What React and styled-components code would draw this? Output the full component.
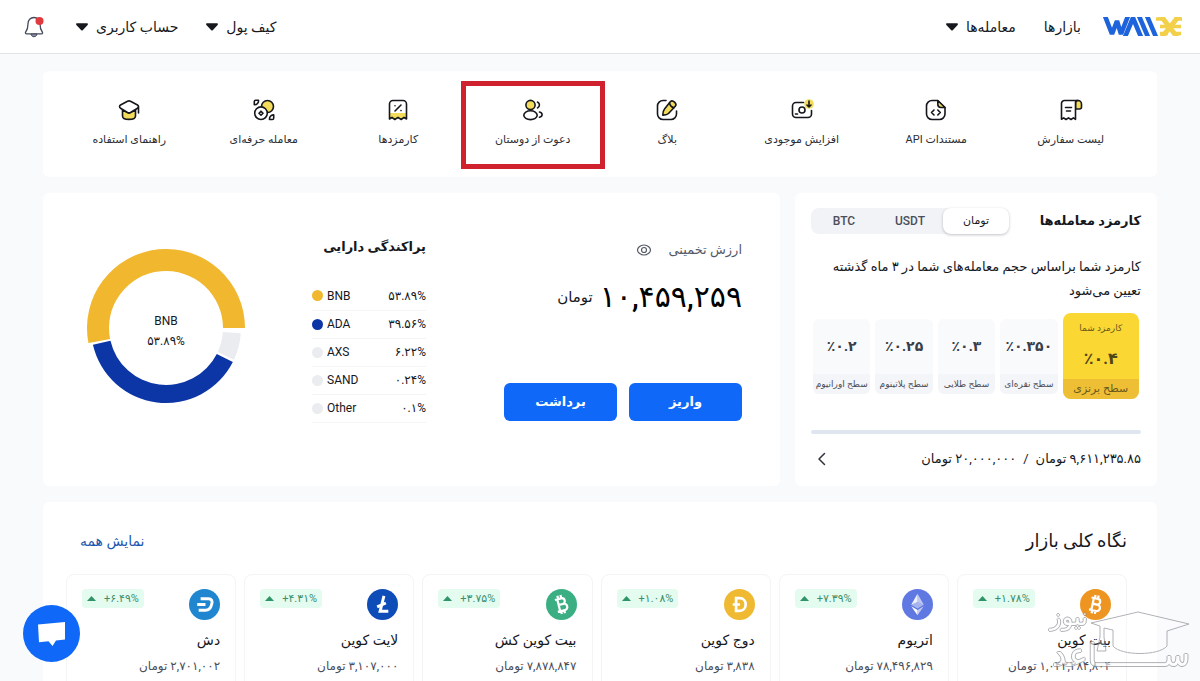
import React, { useState } from "react";
import styled, { createGlobalStyle, css } from "styled-components";

const GlobalStyle = createGlobalStyle`
  * { box-sizing: border-box; }
  body {
    margin: 0;
    background: #f9fafc;
    color: #16181d;
    font-family: Roboto, "DejaVu Sans", sans-serif;
    font-size: 13px;
    line-height: 20px;
  }
  button { font: inherit; color: inherit; border: 0; padding: 0; background: none; cursor: pointer; }
  a { color: inherit; text-decoration: none; }
  h1, h2, h3, p, dl, dd, dt, ul { margin: 0; padding: 0; }
  ul { list-style: none; }
`;

const Page = styled.div`
  min-height: 100vh;
`;

const Header = styled.header`
  display: flex;
  align-items: center;
  justify-content: space-between;
  height: 54px;
  padding: 0 17px 0 24px;
  background: #fff;
  border-bottom: 1px solid #e2e4e9;
`;

const NavGroup = styled.nav`
  display: flex;
  align-items: center;
  gap: 28px;
`;

const Brand = styled.a`
  display: flex;
  margin-left: -6px;
`;

const NavLink = styled.a`
  font-size: 14px;
`;

const NavButton = styled.button`
  display: flex;
  align-items: center;
  gap: 8px;
  font-size: 14px;
`;

const IconButton = styled.button`
  display: flex;
`;

const BellButton = styled(IconButton)`
  padding-right: 4px;
`;

const Main = styled.main`
  display: flex;
  flex-direction: column;
  gap: 16px;
  padding: 17px 43px 0;
`;

const Panel = styled.section`
  background: #fff;
  border-radius: 6px;
`;

const QuickPanel = styled(Panel)`
  display: grid;
  grid-template-columns: repeat(8, 1fr);
  padding: 15px 19px 13px;
`;

const QuickLink = styled.a`
  display: flex;
  flex-direction: column;
  align-items: center;
  gap: 8px;
  height: 78px;
  padding-top: 12px;
  font-size: 11px;
  color: #2b2e35;
  outline: ${(p) => (p.$marked ? "5px solid #d0222e" : "none")};
`;

const Columns = styled.div`
  display: grid;
  grid-template-columns: 362px minmax(0, 1fr);
  gap: 15px;
`;

const FeePanel = styled(Panel)`
  padding: 15px 16px 17px;
`;

const FeeHead = styled.div`
  display: flex;
  align-items: center;
  justify-content: space-between;
`;

const FeeTitle = styled.h2`
  font-size: 13px;
  font-weight: 700;
`;

const Segments = styled.div`
  display: grid;
  grid-template-columns: repeat(3, 66px);
  height: 26px;
  background: #f2f3f6;
  border-radius: 8px;
`;

const Segment = styled.button`
  font-size: 12px;
  font-weight: 500;
  color: #4a4e5a;
  border-radius: 8px;
  ${(p) =>
    p.$active &&
    css`
      font-size: 11px;
      color: #16181d;
      background: #fff;
      box-shadow: 0 1px 3px rgba(30, 40, 60, 0.28);
    `}
`;

const FeeText = styled.p`
  margin-top: 21px;
  font-size: 13px;
  line-height: 24px;
`;

const Tiers = styled.ul`
  display: flex;
  align-items: center;
  gap: 5px;
  margin-top: 10px;
  padding: 0 2px;
`;

const Tier = styled.li`
  flex: 1 1 0;
  display: flex;
  flex-direction: column;
  height: ${(p) => (p.$current ? "86px" : "75px")};
  flex-grow: ${(p) => (p.$current ? 4 : 3)};
  overflow: hidden;
  border-radius: ${(p) => (p.$current ? "8px" : "6px")};
  background: ${(p) => (p.$current ? "#fbd734" : "#f9fafc")};
  text-align: center;
  white-space: nowrap;
`;

const TierCaption = styled.span`
  margin-top: 5px;
  font-size: 9px;
  color: #6b5a1c;
`;

const TierRate = styled.strong`
  flex: 1;
  display: flex;
  align-items: center;
  justify-content: center;
  font-size: ${(p) => (p.$current ? "16px" : "14px")};
  color: ${(p) => (p.$current ? "#4f4518" : "#3a3f4b")};
`;

const TierName = styled.span`
  display: flex;
  justify-content: center;
  font-size: ${(p) => (p.$current ? "11px" : "9px")};
  background: ${(p) => (p.$current ? "#eebf35" : "#f4f5f8")};
  color: ${(p) => (p.$current ? "#6b5a1c" : "#4a4e5a")};
`;

const Track = styled.div`
  height: 4px;
  margin-top: 31px;
  border-radius: 2px;
  background: #dfe6f0;
`;

const FeeFoot = styled.div`
  display: flex;
  align-items: center;
  justify-content: space-between;
  margin-top: 15px;
  padding-left: 6px;
  font-size: 13px;
`;

const Volume = styled.div`
  display: flex;
  gap: 7px;
`;

const WealthPanel = styled(Panel)`
  display: flex;
  padding: 44px 38px 0 43px;
`;

const Balance = styled.div`
  flex: 0 0 238px;
`;

const BalanceLabel = styled.div`
  display: flex;
  align-items: center;
  gap: 17px;
  height: 26px;
  font-size: 13px;
  color: #555a66;
`;

const Amount = styled.p`
  display: flex;
  align-items: center;
  gap: 7px;
  height: 40px;
  margin-top: 14px;
  font-size: 15px;
  white-space: nowrap;
`;

const AmountValue = styled.span`
  font-size: 30px;
  font-weight: 500;
  color: #000;
`;

const Actions = styled.div`
  display: flex;
  gap: 12px;
  margin-top: 66px;
`;

const PrimaryButton = styled.button`
  flex: 1;
  height: 38px;
  border-radius: 6px;
  background: #0f68f8;
  color: #fff;
  font-size: 13px;
  font-weight: 700;
`;

const Spread = styled.div`
  flex: 0 0 114px;
  margin-right: 78px;
`;

const SpreadTitle = styled.h2`
  height: 22px;
  font-size: 13px;
  font-weight: 700;
  white-space: nowrap;
`;

const AssetTable = styled.table`
  width: 100%;
  margin-top: 23px;
  border-collapse: collapse;
  direction: ltr;
`;

const AssetName = styled.th`
  height: 28px;
  padding: 0;
  border-bottom: 1px solid #f4f5f7;
  font-size: 12px;
  font-weight: 400;
  text-align: left;
`;

const AssetLabel = styled.span`
  display: flex;
  align-items: center;
  gap: 4px;
`;

const Dot = styled.i`
  width: 11px;
  height: 11px;
  border-radius: 50%;
  background: ${(p) => p.$color};
`;

const AssetShare = styled.td`
  padding: 0;
  border-bottom: 1px solid #f4f5f7;
  font-size: 12px;
  text-align: right;
`;

const Donut = styled.div`
  display: grid;
  place-items: center;
  width: 160px;
  height: 160px;
  margin: 11px auto 0 0;
  & > * { grid-area: 1 / 1; }
`;

const DonutLabel = styled.div`
  padding-top: 6px;
  font-size: 12px;
  text-align: center;
`;

const MarketPanel = styled(Panel)`
  padding: 26px 30px 20px 23px;
`;

const MarketHead = styled.div`
  display: flex;
  align-items: center;
  justify-content: space-between;
  height: 26px;
  padding-left: 14px;
`;

const MarketTitle = styled.h2`
  font-size: 18px;
  font-weight: 500;
`;

const MoreLink = styled.a`
  font-size: 14px;
  color: #1c56b0;
`;

const CoinGrid = styled.ul`
  display: grid;
  grid-template-columns: repeat(6, minmax(0, 1fr));
  gap: 8px;
  margin-top: 20px;
`;

const CoinCard = styled.li`
  padding: 14px 15px 20px;
  border: 1px solid #f3f4f6;
  border-radius: 8px;
`;

const CoinTop = styled.div`
  display: flex;
  align-items: flex-start;
  justify-content: space-between;
`;

const Change = styled.span`
  display: flex;
  align-items: center;
  gap: 8px;
  height: 19px;
  padding: 0 5px;
  border-radius: 4px;
  background: #e4fbef;
  color: #3f8f6c;
  font-size: 11px;
`;

const CoinName = styled.h3`
  margin-top: 8px;
  font-size: 14px;
  font-weight: 400;
  line-height: 24px;
`;

const CoinPrice = styled.p`
  margin-top: 3px;
  font-size: 12px;
  line-height: 22px;
  color: #4a4e5a;
  white-space: nowrap;
`;

const ChatButton = styled.button`
  position: fixed;
  left: 23px;
  bottom: 19px;
  display: flex;
  align-items: center;
  justify-content: center;
  width: 57px;
  height: 57px;
  border-radius: 50%;
  background: #0f68f8;
`;

const Watermark = styled.div`
  position: fixed;
  right: 10px;
  bottom: 4px;
  width: 160px;
  height: 76px;
  pointer-events: none;
  direction: rtl;
  opacity: 0.65;
  color: #fff;
  text-shadow: 1px 0 #85888e, -1px 0 #85888e, 0 1px #85888e, 0 -1px #85888e;
  white-space: nowrap;
`;

const MarkTop = styled.span`
  position: absolute;
  right: 102px;
  top: 0;
  font-size: 24px;
  line-height: 32px;
`;

const MarkBottom = styled.span`
  position: absolute;
  right: 0;
  bottom: 0;
  font-size: 32px;
  line-height: 44px;
`;

const MarkCap = styled.svg`
  position: absolute;
  right: 0;
  top: 10px;
`;

const Caret = () => (
  <svg width="12" height="8" viewBox="0 0 13 8" aria-hidden="true">
    <path d="M1.2 0h10.6c1 0 1.5 1 .8 1.7L7.3 7.4a1.1 1.1 0 0 1-1.6 0L.4 1.7C-.3 1 .2 0 1.2 0z" fill="#16181d" />
  </svg>
);

const Logo = () => (
  <svg width="80" height="19" viewBox="0 0 80 19" role="img" aria-label="Wallex">
    <g fill="none" stroke="#1c63dc" strokeWidth="4.6" strokeLinejoin="bevel">
      <path d="M2 -1L9 17L14 4L18 17L25 -1" />
      <path d="M22 20L30 1L38 20" />
      <path d="M36 -1L45 20" />
      <path d="M44 -1L53 20" />
    </g>
    <g fill="none" stroke="#f2d04a">
      <path d="M58 -1L74 20M76 -1L59 20" strokeWidth="5" />
      <path d="M53 2H61M57 9.500H78M57 16.500H65M71 2H79M71 16.500H78" strokeWidth="3.500" />
    </g>
  </svg>
);

const Bell = () => (
  <svg width="20" height="22" viewBox="0 0 20 22" fill="none" aria-hidden="true">
    <path d="M10 1.500c-3.600 0-6 2.600-6 6.200 0 4.200-.8 6.300-2.300 8.300-.6.800-.2 1.800.8 1.800h15c1 0 1.400-1 .8-1.800-1.500-2-2.300-4.100-2.300-8.300 0-3.600-2.400-6.200-6-6.200z" stroke="#454a5c" strokeWidth="1.300" />
    <path d="M7 18c.3 1.700 1.500 2.700 3 2.700s2.700-1 3-2.700z" fill="#8f95a5" stroke="#454a5c" />
    <circle cx="15.500" cy="5" r="4" fill="#e03a3e" />
  </svg>
);

const Y = "#f3dc5c";

const QuickIcon = ({ kind }) => {
  const shapes = {
    list: (
      <>
        <path d="M18 2.500h1a3.500 3.500 0 0 1 3.500 3.500v3a2 2 0 0 1-2 2H16.500V4.500z" fill={Y} />
        <path d="M19 2.500H5.500a3 3 0 0 0-3 3V21.300l2.200-1.500 2.300 1.700 2.500-1.700 2.500 1.700 2.400-1.700 2.100 1.500V4.500a2 2 0 0 1 2-2z" fill="#fff" />
        <path d="M6.500 9.500h6M7.500 13h4" />
      </>
    ),
    api: (
      <>
        <path d="M13.500 2.500H8a5.500 5.500 0 0 0-5.500 5.500v8A5.500 5.500 0 0 0 8 21.500h7.500A5.500 5.500 0 0 0 21 16V9.500z" />
        <path d="M13.800 2.500L21 9.500h-4a3.200 3.200 0 0 1-3.200-3.200z" fill={Y} />
        <path d="M10 12l-2.500 2.500L10 17M13.800 12l2.500 2.500-2.500 2.500" />
      </>
    ),
    deposit: (
      <>
        <circle cx="19" cy="6" r="4.800" fill={Y} stroke="none" />
        <path d="M13.500 4.500H6a3.500 3.500 0 0 0-3.500 3.500v8A3.500 3.500 0 0 0 6 19.500h12a3.500 3.500 0 0 0 3.500-3.500v-3.500" />
        <circle cx="12" cy="12" r="3" />
        <path d="M5.500 16h2M19 3v6M17 7l2 2 2-2" />
      </>
    ),
    blog: (
      <>
        <path d="M11 2.500H8A5.500 5.500 0 0 0 2.500 8v8A5.500 5.500 0 0 0 8 21.500h8a5.500 5.500 0 0 0 5.500-5.500v-3" />
        <path d="M15.500 3.500c2.200-2.200 7 2.300 4.800 4.700L13.500 15.500c-1.500 1.500-3.500 1.500-5.700 1.600.1-2.200.2-4.200 1.700-6z" fill={Y} />
        <path d="M14.500 5c.5 2.500 2 4.200 4.500 4.700" />
      </>
    ),
    friends: (
      <>
        <circle cx="9.500" cy="7" r="4.600" fill={Y} />
        <ellipse cx="9.500" cy="17.200" rx="6.700" ry="4.400" />
        <path d="M16.500 4a3.300 3.300 0 0 1 0 6M18.500 14c3.500.8 3.500 4.400 0 5.300" />
      </>
    ),
    fees: (
      <>
        <path d="M4 15h16v6l-2.500-1.700L15 21.500l-3-2.200-2.800 2.200-2.700-2.200L4 21z" fill={Y} stroke="none" />
        <path d="M7 2.500h10a3.500 3.500 0 0 1 3.500 3.500v15l-2.500-1.600-2.800 2.100-3.200-2.100-3.200 2.100L6 19.400 3.500 21V6A3.500 3.500 0 0 1 7 2.500z" />
        <path d="M9 13l6-6M9 7.700v.1M15 12.500v.1" />
      </>
    ),
    trade: (
      <>
        <circle cx="15.500" cy="8.500" r="6" fill={Y} />
        <circle cx="9" cy="15.200" r="6.300" fill="#fff" />
        <path d="M9 13.200l2 2-2 2-2-2zM2.300 3.500c0-.8.500-1.300 1.300-1.300h2.900c.3 2.500-1.500 4.800-4.200 4.600zM21.700 20.200c0 .8-.5 1.300-1.300 1.300h-2.900c-.3-2.500 1.500-4.800 4.200-4.600z" />
      </>
    ),
    guide: (
      <>
        <path d="M5.500 12v6c0 4.500 13 4.500 13 0v-6l-6.500 3z" fill={Y} />
        <path d="M10.500 3.300L3.500 7c-1.300.8-1.300 2.400 0 3.200l7 4.300a3 3 0 0 0 3 0l7-4.300c1.300-.8 1.300-2.400 0-3.200l-7-3.700a3.200 3.200 0 0 0-3 0z" fill="#fff" />
        <path d="M21.500 9v6" />
      </>
    ),
  };
  return (
    <svg width="24" height="24" viewBox="0 0 24 24" fill="none" stroke="#15171c" strokeWidth="1.600" strokeLinecap="round" strokeLinejoin="round" aria-hidden="true">
      {shapes[kind]}
    </svg>
  );
};

const Eye = () => (
  <svg width="16" height="14" viewBox="0 0 16 14" fill="none" stroke="#555a66" strokeWidth="1.200" aria-hidden="true">
    <path d="M8 2C4 2 1.500 4.800 1.500 7S4 12 8 12s6.500-2.800 6.500-5S12 2 8 2z" />
    <circle cx="8" cy="7" r="2.500" />
  </svg>
);

const ChevronLeft = () => (
  <svg width="9" height="14" viewBox="0 0 9 14" fill="none" stroke="#30333b" strokeWidth="1.500" strokeLinecap="round" strokeLinejoin="round" aria-hidden="true">
    <path d="M7.500 1.500L2 7l5.500 5.500" />
  </svg>
);

const UpMark = () => (
  <svg width="9" height="5" viewBox="0 0 9 5" aria-hidden="true">
    <path d="M4.500 0L9 5H0z" fill="#2f9468" />
  </svg>
);

const BitcoinShape = () => (
  <path
    d="M10.500 9.800h6.700a3 3 0 0 1 0 6H13h5a3.300 3.300 0 0 1 0 6.600h-7.500M13 9.500v13M14 6.300v3.500M17.300 6.300v3.500M14 22v3.600M17.300 22v3.600"
    fill="none"
    stroke="#fff"
    strokeWidth="2.300"
  />
);

const CoinIcon = ({ kind }) => {
  const marks = {
    btc: ["#ee9420", <g key="s" transform="rotate(12 16 16)"><BitcoinShape /></g>],
    eth: [
      "#6079e2",
      <g key="s" fill="#fff">
        <path d="M16 5v8.300l-6.500 3z" opacity=".9" />
        <path d="M16 5l6.500 11.300-6.500-3z" opacity=".6" />
        <path d="M16 13.300l6.500 3L16 20.200l-6.500-3.900z" opacity=".45" />
        <path d="M16 21.700V27L9.500 17.800z" />
        <path d="M16 21.700l6.500-3.900L16 27z" opacity=".6" />
      </g>,
    ],
    doge: ["#efb931", <path key="s" d="M12.500 9.500h3.500c8.500 0 8.500 13 0 13h-3.500zM9 16h7.500" fill="none" stroke="#fff" strokeWidth="2.800" />],
    bch: ["#3bae83", <g key="s" transform="rotate(-14 16 16)"><BitcoinShape /></g>],
    ltc: ["#0e4cb8", <path key="s" d="M17.500 7l-4 16h8.500M10.500 18.500l9-4" fill="none" stroke="#fff" strokeWidth="3" />],
    dash: ["#1f86cf", <path key="s" d="M12 10h8c3.500 0 4.300 2.500 3.500 5.500-1 4.500-3 6.500-6.500 6.500h-7M8.500 16h8.500" fill="none" stroke="#fff" strokeWidth="3" strokeLinejoin="round" />],
  };
  const [color, mark] = marks[kind];
  return (
    <svg width="31" height="31" viewBox="0 0 32 32" aria-hidden="true">
      <circle cx="16" cy="16" r="16" fill={color} />
      {mark}
    </svg>
  );
};

const point = (r, deg) => {
  const a = (deg * Math.PI) / 180;
  return `${80 + r * Math.cos(a)} ${80 + r * Math.sin(a)}`;
};

const slice = (from, to, outer, inner) => {
  const large = to - from > 180 ? 1 : 0;
  return `M${point(outer, from)}A${outer} ${outer} 0 ${large} 1 ${point(outer, to)}L${point(inner, to)}A${inner} ${inner} 0 ${large} 0 ${point(inner, from)}Z`;
};

const quickLinks = [
  ["list", "لیست سفارش"],
  ["api", "مستندات API"],
  ["deposit", "افزایش موجودی"],
  ["blog", "بلاگ"],
  ["friends", "دعوت از دوستان"],
  ["fees", "کارمزدها"],
  ["trade", "معامله حرفه‌ای"],
  ["guide", "راهنمای استفاده"],
];

const tiers = [
  ["٪۰.۴", "سطح برنزی"],
  ["٪۰.۳۵۰", "سطح نقره‌ای"],
  ["٪۰.۳", "سطح طلایی"],
  ["٪۰.۲۵", "سطح پلاتینوم"],
  ["٪۰.۲", "سطح اورانیوم"],
];

const assets = [
  ["BNB", "۵۳.۸۹%", "#f0b72f"],
  ["ADA", "۳۹.۵۶%", "#0c35a6"],
  ["AXS", "۶.۲۲%", "#ebecf0"],
  ["SAND", "۰.۲۴%", "#ebecf0"],
  ["Other", "۰.۱%", "#ebecf0"],
];

const coins = [
  ["btc", "بیت کوین", "۱,۰۴۳,۲۸۴,۸۰۴", "+۱.۷۸%"],
  ["eth", "اتریوم", "۷۸,۴۹۶,۸۲۹", "+۷.۳۹%"],
  ["doge", "دوج کوین", "۳,۸۳۸", "+۱.۰۸%"],
  ["bch", "بیت کوین کش", "۷,۸۷۸,۸۴۷", "+۳.۷۵%"],
  ["ltc", "لایت کوین", "۳,۱۰۷,۰۰۰", "+۴.۳۱%"],
  ["dash", "دش", "۲,۷۰۱,۰۰۲", "+۶.۴۹%"],
];

const units = ["تومان", "USDT", "BTC"];

export default function App() {
  const [unit, setUnit] = useState("تومان");
  return (
    <Page dir="rtl" lang="fa">
      <GlobalStyle />
      <Header>
        <NavGroup>
          <Brand href="#"><Logo /></Brand>
          <NavLink href="#">بازارها</NavLink>
          <NavButton>معامله‌ها<Caret /></NavButton>
        </NavGroup>
        <NavGroup>
          <NavButton>کیف پول<Caret /></NavButton>
          <NavButton>حساب کاربری<Caret /></NavButton>
          <BellButton aria-label="اعلان‌ها"><Bell /></BellButton>
        </NavGroup>
      </Header>
      <Main>
        <QuickPanel>
          {quickLinks.map(([kind, label]) => (
            <QuickLink key={kind} href="#" $marked={kind === "friends"}>
              <QuickIcon kind={kind} />
              {label}
            </QuickLink>
          ))}
        </QuickPanel>
        <Columns>
          <FeePanel>
            <FeeHead>
              <FeeTitle>کارمزد معامله‌ها</FeeTitle>
              <Segments>
                {units.map((u) => (
                  <Segment key={u} $active={u === unit} aria-pressed={u === unit} onClick={() => setUnit(u)}>
                    {u}
                  </Segment>
                ))}
              </Segments>
            </FeeHead>
            <FeeText>کارمزد شما براساس حجم معامله‌های شما در ۳ ماه گذشته تعیین می‌شود</FeeText>
            <Tiers>
              {tiers.map(([rate, name], i) => (
                <Tier key={name} $current={i === 0}>
                  {i === 0 && <TierCaption>کارمزد شما</TierCaption>}
                  <TierRate dir="ltr" $current={i === 0}>{rate}</TierRate>
                  <TierName $current={i === 0}>{name}</TierName>
                </Tier>
              ))}
            </Tiers>
            <Track />
            <FeeFoot>
              <Volume>
                <span>۹,۶۱۱,۲۳۵.۸۵ تومان</span>
                <span>/</span>
                <span>۲۰,۰۰۰,۰۰۰ تومان</span>
              </Volume>
              <IconButton aria-label="جزئیات"><ChevronLeft /></IconButton>
            </FeeFoot>
          </FeePanel>
          <WealthPanel>
            <Balance>
              <BalanceLabel>
                ارزش تخمینی
                <IconButton aria-label="نمایش موجودی"><Eye /></IconButton>
              </BalanceLabel>
              <Amount><AmountValue>۱۰,۴۵۹,۲۵۹</AmountValue>تومان</Amount>
              <Actions>
                <PrimaryButton>واریز</PrimaryButton>
                <PrimaryButton>برداشت</PrimaryButton>
              </Actions>
            </Balance>
            <Spread>
              <SpreadTitle>پراکندگی دارایی</SpreadTitle>
              <AssetTable>
                <tbody>
                  {assets.map(([name, share, color]) => (
                    <tr key={name}>
                      <AssetName scope="row"><AssetLabel><Dot $color={color} />{name}</AssetLabel></AssetName>
                      <AssetShare>{share}</AssetShare>
                    </tr>
                  ))}
                </tbody>
              </AssetTable>
            </Spread>
            <Donut dir="ltr">
              <svg width="160" height="160" viewBox="0 0 160 160" aria-hidden="true">
                <path d={slice(169, 360, 79, 57)} fill="#f0b72f" />
                <path d={slice(27, 167, 75, 57)} fill="#0c35a6" />
                <path d={slice(4, 25, 75, 57)} fill="#ebecf0" />
              </svg>
              <DonutLabel>
                <div>BNB</div>
                <div>۵۳.۸۹%</div>
              </DonutLabel>
            </Donut>
          </WealthPanel>
        </Columns>
        <MarketPanel>
          <MarketHead>
            <MarketTitle>نگاه کلی بازار</MarketTitle>
            <MoreLink href="#">نمایش همه</MoreLink>
          </MarketHead>
          <CoinGrid>
            {coins.map(([kind, name, price, change]) => (
              <CoinCard key={kind}>
                <CoinTop>
                  <CoinIcon kind={kind} />
                  <Change dir="ltr"><UpMark />{change}</Change>
                </CoinTop>
                <CoinName>{name}</CoinName>
                <CoinPrice>{price} تومان</CoinPrice>
              </CoinCard>
            ))}
          </CoinGrid>
        </MarketPanel>
      </Main>
      <ChatButton aria-label="گفتگو">
        <svg width="29" height="26" viewBox="0 0 29 26" aria-hidden="true">
          <path d="M1 3.500L28 1v17.500l-9 1-3.500 5.500-4-4.700-9.500 1z" fill="#fff" />
        </svg>
      </ChatButton>
      <Watermark>
        <MarkTop>نیوز</MarkTop>
        <MarkBottom>ســـــــاعد</MarkBottom>
        <MarkCap width="100" height="44" viewBox="0 0 100 44" fill="rgba(255,255,255,.45)" stroke="#85888e" aria-hidden="true">
          <path d="M1 12L48 1l51 12-22 7v15c-8 10-46 10-54 0V19l-9-2v9l2 14H7l3-14v-11z" />
        </MarkCap>
      </Watermark>
    </Page>
  );
}
